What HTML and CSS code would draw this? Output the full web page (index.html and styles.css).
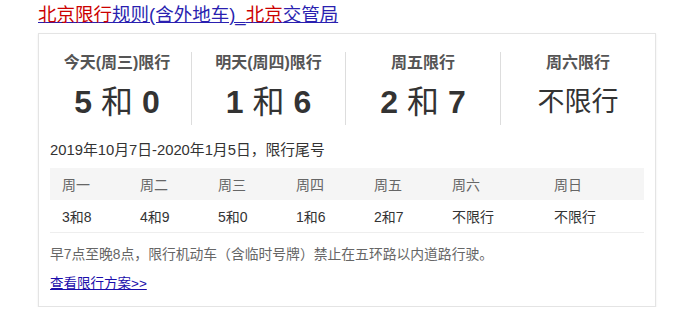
FILE: index.html
```html
<!DOCTYPE html>
<html lang="zh-CN">
<head>
<meta charset="utf-8">
<title>北京限行规则</title>
<link rel="stylesheet" href="styles.css">
</head>
<body>
<div class="result">
  <h3 class="title"><a href="#"><em>北京限行</em>规则(含外地车)_<em>北京</em>交管局</a></h3>
  <div class="card">
    <div class="days">
      <div class="day first">
        <div class="label">今天(周三)限行</div>
        <div class="num">5 <span class="he">和</span> 0</div>
      </div>
      <div class="day">
        <div class="label">明天(周四)限行</div>
        <div class="num">1 <span class="he">和</span> 6</div>
      </div>
      <div class="day">
        <div class="label">周五限行</div>
        <div class="num">2 <span class="he">和</span> 7</div>
      </div>
      <div class="day">
        <div class="label">周六限行</div>
        <div class="num free">不限行</div>
      </div>
    </div>
    <div class="period">2019年10月7日-2020年1月5日，限行尾号</div>
    <table class="week">
      <thead>
        <tr><th>周一</th><th>周二</th><th>周三</th><th>周四</th><th>周五</th><th class="wide">周六</th><th class="wide">周日</th></tr>
      </thead>
      <tbody>
        <tr><td>3和8</td><td>4和9</td><td>5和0</td><td>1和6</td><td>2和7</td><td>不限行</td><td>不限行</td></tr>
      </tbody>
    </table>
    <p class="note">早7点至晚8点，限行机动车（含临时号牌）禁止在五环路以内道路行驶。</p>
    <a class="more" href="#">查看限行方案&gt;&gt;</a>
  </div>
</div>
</body>
</html>
```

FILE: styles.css
```css
html, body {
  margin: 0;
  padding: 0;
  background: #fff;
}
body {
  font-family: "Liberation Sans", Arial, "Noto Sans CJK SC", sans-serif;
  color: #333;
}
.result {
  padding: 3px 0 0 38px;
  width: 618px;
}
.title {
  margin: 0 0 6px;
  font-size: 18.5px;
  line-height: 24px;
  font-weight: normal;
}
.title a {
  color: #2a1fb0;
  text-decoration: underline;
}
.title em {
  font-style: normal;
  color: #c00;
}
.card {
  border: 1px solid #e4e4e4;
  box-shadow: 0 1px 2px rgba(0,0,0,0.08);
  padding: 18px 11px 12px;
  display: flex;
  flex-direction: column;
}
.days {
  display: grid;
  grid-template-columns: 148px 154px 155px 1fr;
  margin: 0 -11px;
  padding-left: 4px;
}
.day {
  border-left: 1px solid #ddd;
  text-align: center;
  padding-bottom: 1px;
}
.day.first {
  border-left: none;
}
.label {
  font-size: 16px;
  line-height: 22px;
  color: #555;
  font-weight: 600;
}
.num {
  margin-top: 6px;
  font-size: 32px;
  line-height: 44px;
  font-weight: bold;
  color: #333;
}
.num .he {
  font-weight: normal;
}
.num.free {
  font-size: 27px;
  font-weight: normal;
}
.period {
  margin-top: 15px;
  font-size: 14.8px;
  line-height: 20px;
  color: #333;
}
.week {
  margin-top: 8px;
  width: 594px;
  border-collapse: collapse;
  font-size: 14px;
}
.week th, .week td {
  width: 66px;
  padding: 0 0 0 12px;
  height: 32px;
  text-align: left;
  font-weight: normal;
}
.week th.wide {
  width: 90px;
}
.week thead tr {
  background: #f5f5f5;
}
.week th {
  color: #666;
}
.week td {
  color: #333;
  border-bottom: 1px solid #eee;
}
.note {
  margin: 12px 0 0;
  font-size: 13.8px;
  line-height: 20px;
  color: #666;
}
.more {
  margin-top: 9px;
  align-self: flex-start;
  font-size: 13.5px;
  line-height: 20px;
  color: #1a0dab;
  text-decoration: underline;
}
```
